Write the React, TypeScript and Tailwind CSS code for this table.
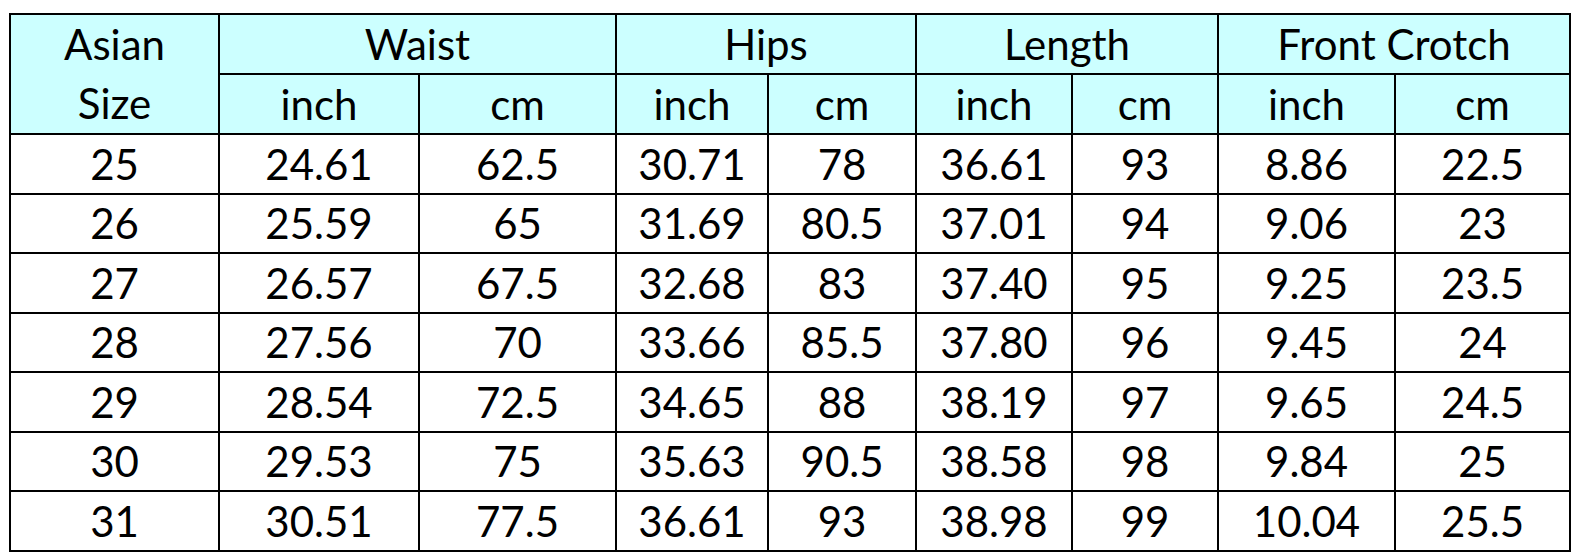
import { Fragment } from 'react';

const groups = ['Waist', 'Hips', 'Length', 'Front Crotch'];

const rows = [
  ['25', '24.61', '62.5', '30.71', '78', '36.61', '93', '8.86', '22.5'],
  ['26', '25.59', '65', '31.69', '80.5', '37.01', '94', '9.06', '23'],
  ['27', '26.57', '67.5', '32.68', '83', '37.40', '95', '9.25', '23.5'],
  ['28', '27.56', '70', '33.66', '85.5', '37.80', '96', '9.45', '24'],
  ['29', '28.54', '72.5', '34.65', '88', '38.19', '97', '9.65', '24.5'],
  ['30', '29.53', '75', '35.63', '90.5', '38.58', '98', '9.84', '25'],
  ['31', '30.51', '77.5', '36.61', '93', '38.98', '99', '10.04', '25.5']
];

const cell = 'border-2 border-black p-0 text-center font-normal';

export default function App() {
  return (
    <div className="min-h-[560px] bg-white pt-[13px] pl-[9px] font-['Lato','Open_Sans',sans-serif] text-[42px] text-black">
      <table className="w-[1560px] table-fixed border-collapse">
        <colgroup>
          <col className="w-[209px]" />
          <col className="w-[200px]" />
          <col className="w-[197px]" />
          <col className="w-[152px]" />
          <col className="w-[148px]" />
          <col className="w-[156px]" />
          <col className="w-[146px]" />
          <col className="w-[177px]" />
          <col className="w-[175px]" />
        </colgroup>
        <thead className="bg-[#ccffff]">
          <tr className="h-[60px]">
            <th rowSpan={2} className={`${cell} leading-[59px]`}>
              Asian
              <br />
              Size
            </th>
            {groups.map((g) => (
              <th key={g} colSpan={2} className={`${cell} leading-none`}>
                {g}
              </th>
            ))}
          </tr>
          <tr className="h-[60px]">
            {groups.map((g) => (
              <Fragment key={g}>
                <th className={`${cell} leading-none`}>inch</th>
                <th className={`${cell} leading-none`}>cm</th>
              </Fragment>
            ))}
          </tr>
        </thead>
        <tbody>
          {rows.map((row) => (
            <tr key={row[0]} className="h-[59.5px]">
              {row.map((value, i) => (
                <td key={i} className={`${cell} leading-none`}>
                  {value}
                </td>
              ))}
            </tr>
          ))}
        </tbody>
      </table>
    </div>
  );
}
